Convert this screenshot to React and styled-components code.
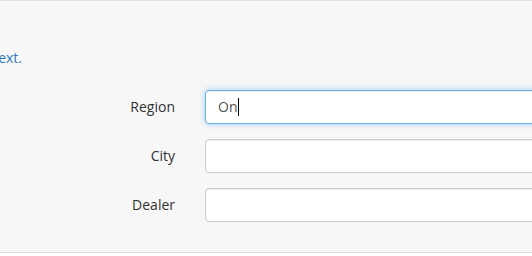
import React from "react";
import styled, { createGlobalStyle } from "styled-components";

const GlobalStyle = createGlobalStyle({
  body: {
    margin: 0,
    background: "#ffffff",
    fontFamily: '"Open Sans", "Liberation Sans", sans-serif',
    overflow: "hidden",
  },
});

const Panel = styled.div({
  background: "#f7f7f7",
  borderTop: "1px solid #e3e3e3",
  borderBottom: "1px solid #dddddd",
  boxSizing: "border-box",
  height: "253px",
  paddingTop: "47px",
});

// the hint sentence runs off the left edge; only its tail shows
const HelpHolder = styled.div({
  width: "22px",
  display: "flex",
  justifyContent: "flex-end",
  whiteSpace: "nowrap",
});

const HelpText = styled.p({
  margin: 0,
  fontSize: "14px",
  lineHeight: "20px",
  color: "#337ab7",
});

const Form = styled.div({
  marginTop: "22px",
  width: "760px",
  display: "flex",
  flexDirection: "column",
  gap: "15px",
});

const Row = styled.div({
  display: "grid",
  gridTemplateColumns: "175px 1fr",
  columnGap: "30px",
  alignItems: "center",
});

const Label = styled.label({
  textAlign: "right",
  fontSize: "14px",
  lineHeight: "20px",
  color: "#333333",
});

const Field = styled.div`
  height: 34px;
  box-sizing: border-box;
  background: #ffffff;
  border: 1px solid ${(p) => (p.$focused ? "#66afe9" : "#cccccc")};
  border-radius: 4px;
  box-shadow: ${(p) =>
    p.$focused
      ? "inset 0 1px 1px rgba(0,0,0,.075), 0 0 6px rgba(102,175,233,.6)"
      : "inset 0 1px 1px rgba(0,0,0,.075)"};
  padding: 6px 12px;
  font-size: 14px;
  line-height: 20px;
  color: #555555;
  display: flex;
  align-items: center;
`;

const Caret = styled.span({
  display: "inline-block",
  width: "1px",
  height: "18px",
  background: "#000000",
  marginLeft: "1px",
});

const rows = [
  { label: "Region", value: "On", focused: true },
  { label: "City", value: "" },
  { label: "Dealer", value: "" },
];

export default function App() {
  return (
    <>
      <GlobalStyle />
      <Panel>
        <HelpHolder>
          <HelpText>Start typing to see suggestions for the next.</HelpText>
        </HelpHolder>
        <Form>
          {rows.map((r) => (
            <Row key={r.label}>
              <Label>{r.label}</Label>
              <Field $focused={r.focused}>
                {r.value}
                {r.focused && <Caret />}
              </Field>
            </Row>
          ))}
        </Form>
      </Panel>
    </>
  );
}
